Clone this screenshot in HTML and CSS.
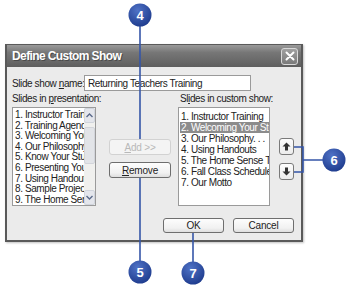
FILE: index.html
```html
<!DOCTYPE html>
<html lang="en">
<head>
    <meta charset="UTF-8">
    <title>Define Custom Show</title>
    <link rel="stylesheet" href="styles.css">
</head>
<body>
    <!-- Dialog window -->
    <div class="dialog">
        <div class="titlebar">
            <span class="title">Define Custom Show</span>
            <span class="close">
                <svg width="10" height="10" viewBox="0 0 10 10"><path d="M1.5 1.5 L8.5 8.5 M8.5 1.5 L1.5 8.5" stroke="#fff" stroke-width="2" stroke-linecap="round"/></svg>
            </span>
        </div>

        <div class="body">
            <div class="name-row">
                <label>Slide show <u>n</u>ame:</label>
                <div class="textbox">Returning Teachers Training</div>
            </div>

            <div class="main">
                <div class="col col-left">
                    <div class="label">Slides in <u>p</u>resentation:</div>
                    <div class="listbox">
                        <ul class="items items-tight">
                            <li>1. Instructor Training</li>
                            <li>2. Training Agenda</li>
                            <li>3. Welcoming Your Students</li>
                            <li>4. Our Philosophy</li>
                            <li>5. Know Your Students</li>
                            <li>6. Presenting Your Course</li>
                            <li>7. Using Handouts</li>
                            <li>8. Sample Projects</li>
                            <li>9. The Home Sense</li>
                        </ul>
                        <div class="scrollbar">
                            <span class="sb-btn">
                                <svg width="7" height="5" viewBox="0 0 7 5"><path d="M0.5 4 L3.5 1 L6.5 4" fill="none" stroke="#5a6a8a" stroke-width="1.4"/></svg>
                            </span>
                            <span class="sb-track"><span class="sb-thumb"></span></span>
                            <span class="sb-btn">
                                <svg width="7" height="5" viewBox="0 0 7 5"><path d="M0.5 1 L3.5 4 L6.5 1" fill="none" stroke="#5a6a8a" stroke-width="1.4"/></svg>
                            </span>
                        </div>
                    </div>
                </div>

                <div class="col col-middle">
                    <button class="btn disabled"><u>A</u>dd &gt;&gt;</button>
                    <button class="btn"><u>R</u>emove</button>
                </div>

                <div class="col col-right">
                    <div class="label">Sl<u>i</u>des in custom show:</div>
                    <div class="listbox">
                        <ul class="items">
                            <li>1. Instructor Training</li>
                            <li class="selected">2. Welcoming Your Students</li>
                            <li>3. Our Philosophy. . .</li>
                            <li>4. Using Handouts</li>
                            <li>5. The Home Sense Test</li>
                            <li>6. Fall Class Schedule</li>
                            <li>7. Our Motto</li>
                        </ul>
                    </div>
                </div>

                <div class="col col-arrows">
                    <button class="arrow-btn">
                        <svg width="9" height="9" viewBox="0 0 9 9"><path d="M4.5 0.5 L8.5 4.5 L6 4.5 L6 8.5 L3 8.5 L3 4.5 L0.5 4.5 Z" fill="#333"/></svg>
                    </button>
                    <button class="arrow-btn">
                        <svg width="9" height="9" viewBox="0 0 9 9"><path d="M4.5 8.5 L8.5 4.5 L6 4.5 L6 0.5 L3 0.5 L3 4.5 L0.5 4.5 Z" fill="#333"/></svg>
                    </button>
                </div>
            </div>

            <div class="footer">
                <button class="btn btn-wide">OK</button>
                <button class="btn btn-wide">Cancel</button>
            </div>
        </div>
    </div>

    <!-- Numbered callouts laid over the dialog -->
    <svg class="callouts" width="350" height="288" viewBox="0 0 350 288">
        <defs>
            <radialGradient id="ball" cx="40%" cy="30%" r="75%">
                <stop offset="0" stop-color="#4f72c6"/>
                <stop offset="1" stop-color="#1d3a8c"/>
            </radialGradient>
        </defs>
        <g stroke="#3556a8" stroke-width="1.6" fill="none">
            <path d="M140 26 V139"/>
            <path d="M140 178 V262"/>
            <path d="M193 233 V263"/>
            <path d="M294 147 H303 V172 H294 M303 160 H324"/>
        </g>
        <g fill="url(#ball)">
            <circle cx="140" cy="15" r="11.5"/>
            <circle cx="140" cy="272" r="11.5"/>
            <circle cx="334" cy="160" r="11.5"/>
            <circle cx="193" cy="273" r="11.5"/>
        </g>
        <g class="num" fill="#fff" text-anchor="middle">
            <text x="140" y="20">4</text>
            <text x="140" y="277">5</text>
            <text x="334" y="165">6</text>
            <text x="193" y="278">7</text>
        </g>
    </svg>
</body>
</html>
```

FILE: styles.css
```css
body {
    margin: 0;
    width: 350px;
    height: 288px;
    background: #fff;
    font-family: "Liberation Sans", Arial, sans-serif;
    font-size: 10px;
    letter-spacing: -0.4px;
    color: #222;
    overflow: hidden;
    position: relative;
}

/* Dialog frame */
.dialog {
    margin: 44px 0 0 5px;
    width: 298px;
    box-sizing: border-box;
    border: 2px solid #5a5a5a;
    border-top-width: 1px;
    background: #ebebeb;
    box-shadow: 1px 1px 2px rgba(0, 0, 0, 0.25);
}

.titlebar {
    height: 22px;
    display: flex;
    align-items: center;
    justify-content: space-between;
    padding: 0 3px 0 5px;
    background: linear-gradient(#9a9a9a, #767676 35%, #686868 75%, #5e5e5e);
}

.title {
    color: #fff;
    font-weight: bold;
    font-size: 12px;
    letter-spacing: -0.6px;
    text-shadow: 1px 1px 0 #4a4a4a;
}

.close {
    width: 15px;
    height: 15px;
    border: 1px solid #d8d8d8;
    border-radius: 3px;
    background: linear-gradient(#a0a0a0, #7a7a7a);
    display: flex;
    align-items: center;
    justify-content: center;
}

.body {
    padding: 8px 7px 7px 5px;
}

/* Name row */
.name-row {
    display: flex;
    align-items: center;
    height: 16px;
}

.name-row label {
    width: 72px;
    white-space: nowrap;
}

.textbox {
    width: 167px;
    height: 16px;
    box-sizing: border-box;
    border: 1px solid #9a9a9a;
    background: #fff;
    padding: 1px 3px;
    line-height: 13px;
}

/* Lists and buttons */
.main {
    display: flex;
    margin-top: 2px;
}

.col {
    display: flex;
    flex-direction: column;
}

.col-left {
    width: 84px;
}

.col-middle {
    width: 62px;
    margin-left: 13px;
    padding-top: 46px;
    gap: 7px;
}

.col-right {
    width: 92px;
    margin-left: 7px;
}

.col-arrows {
    width: 15px;
    margin-left: 9px;
    padding-top: 45px;
    gap: 8px;
}

.label {
    height: 14px;
    line-height: 12px;
    white-space: nowrap;
}

.col-right .label {
    padding-left: 2px;
}

.listbox {
    height: 99px;
    box-sizing: border-box;
    border: 1px solid #9a9a9a;
    background: #fff;
    display: flex;
    overflow: hidden;
}

.items {
    list-style: none;
    margin: 0;
    padding: 3px 0 0 1px;
    flex: 1;
    min-width: 0;
}

.items li {
    height: 11px;
    line-height: 11px;
    white-space: nowrap;
    overflow: hidden;
    padding-left: 1px;
}

.items-tight {
    padding-top: 2px;
}

.items-tight li {
    height: 10.6px;
    line-height: 10.6px;
}

.items li.selected {
    background: #8c8c8c;
    color: #fff;
}

.scrollbar {
    width: 11px;
    flex: none;
    display: flex;
    flex-direction: column;
    background: #f0f0ee;
}

.sb-btn {
    height: 13px;
    display: flex;
    align-items: center;
    justify-content: center;
    background: #e4e6ec;
    border: 1px solid #d0d4dc;
    border-radius: 2px;
}

.sb-track {
    flex: 1;
    padding: 4px 0;
    display: flex;
}

.sb-thumb {
    flex: 1;
    margin: 0 0 22px;
    background: #e2e4e8;
    border: 1px solid #d2d4da;
    border-radius: 2px;
}

.btn {
    font-family: "Liberation Sans", Arial, sans-serif;
    font-size: 10px;
    letter-spacing: -0.2px;
    color: #222;
    height: 16px;
    width: 62px;
    padding: 0;
    border: 1px solid #6e6e6e;
    border-radius: 3px;
    background: linear-gradient(#fdfdfd, #f1f1f1 70%, #dedede);
    line-height: 13px;
}

.btn.disabled {
    color: #b8b8b8;
    border-color: #d2d2d2;
    background: #f4f4f4;
}

.arrow-btn {
    width: 15px;
    height: 17px;
    padding: 0;
    border: 1px solid #7a7a7a;
    border-radius: 3px;
    background: linear-gradient(#fdfdfd, #ececec);
    display: flex;
    align-items: center;
    justify-content: center;
}

.footer {
    display: flex;
    justify-content: flex-end;
    gap: 9px;
    margin-top: 12px;
}

.btn-wide {
    width: 61px;
    height: 15px;
}

/* Callouts */
.callouts {
    position: absolute;
    left: 0;
    top: 0;
    pointer-events: none;
}

.num text {
    font-family: "Liberation Sans", Arial, sans-serif;
    font-weight: bold;
    font-size: 13px;
    letter-spacing: 0;
}
```
